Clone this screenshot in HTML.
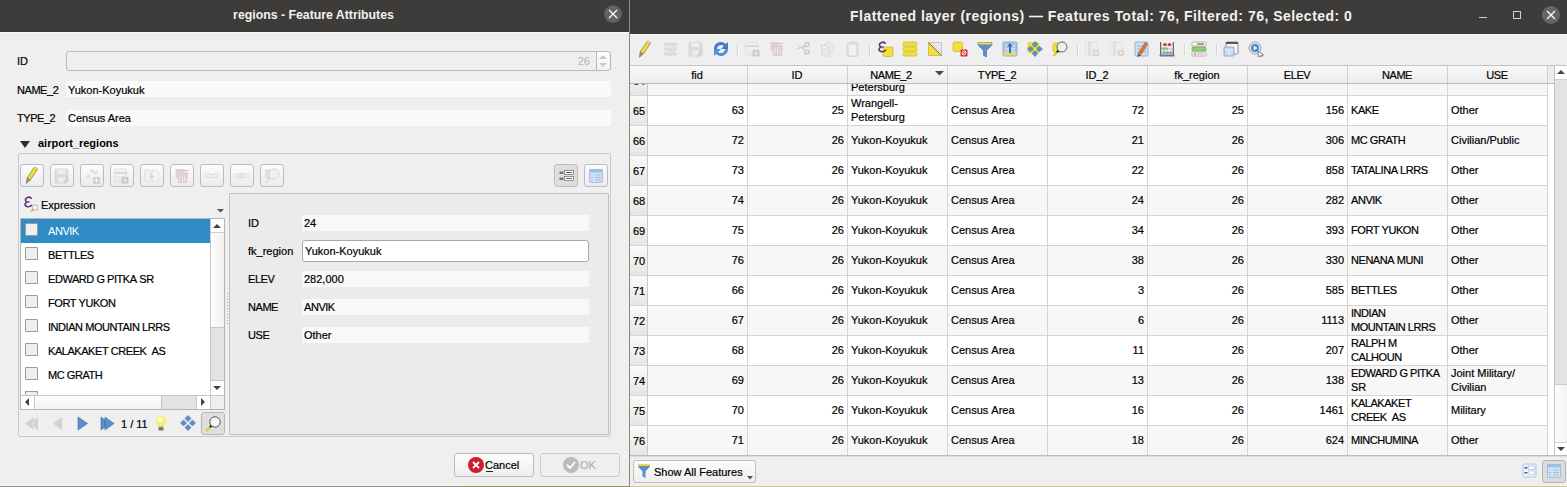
<!DOCTYPE html><html><head><meta charset="utf-8"><style>
html,body{margin:0;padding:0;width:1567px;height:487px;overflow:hidden;background:#efefef;}
body{position:relative;font-family:"Liberation Sans",sans-serif;}
.t{position:absolute;white-space:pre;-webkit-text-stroke:0.2px currentColor;}
.r{position:absolute;}
</style></head><body>
<div class="r" style="left:0px;top:0px;width:629px;height:487px;background:#efefef;"></div>
<div class="r" style="left:0px;top:0px;width:629px;height:32px;background:#3d3c3a;"></div>
<div class="r" style="left:0px;top:32px;width:629px;height:1px;background:#f8f8f8;"></div>
<div class="t" style="left:163.5px;top:8.24px;font-size:12.3px;line-height:15px;color:#f4f2ee;font-weight:bold;-webkit-text-stroke:0;width:300px;text-align:center;">regions - Feature Attributes</div>
<svg class="r" style="left:604px;top:5px" width="18" height="18"><circle cx="9" cy="9" r="8.8" fill="#636262"/><path d="M5 5L13 13M13 5L5 13" stroke="#fff" stroke-width="1.2"/></svg>
<div class="t" style="left:17px;top:54.69px;font-size:11px;line-height:13px;color:#000;">ID</div>
<div class="r" style="left:66px;top:51px;width:545px;height:20px;background:#efefef;border:1px solid #b9b9b9;box-sizing:border-box;border-radius:3px;"></div>
<div class="t" style="left:550px;top:54.69px;font-size:11px;line-height:13px;color:#b4b4b4;width:40px;text-align:right;-webkit-text-stroke:0;">26</div>
<div class="r" style="left:597px;top:52px;width:12px;height:18px;background:linear-gradient(#ffffff,#f2f2f2);border-radius:2px;"></div>
<div class="r" style="left:596px;top:52px;width:1px;height:18px;background:#b9b9b9;"></div>
<svg class="r" style="left:599px;top:55px" width="8" height="13"><path d="M0 4L8 4L4 0Z" fill="#c9c9c9"/><path d="M0 8L8 8L4 12Z" fill="#c9c9c9"/></svg>
<div class="t" style="left:17px;top:83.69px;font-size:11px;line-height:13px;color:#000;letter-spacing:-0.45px;">NAME_2</div>
<div class="r" style="left:66px;top:81px;width:545px;height:16px;background:#fafafa;"></div>
<div class="t" style="left:68px;top:83.69px;font-size:11px;line-height:13px;color:#000;">Yukon-Koyukuk</div>
<div class="t" style="left:17px;top:111.69px;font-size:11px;line-height:13px;color:#000;letter-spacing:-0.45px;">TYPE_2</div>
<div class="r" style="left:66px;top:110px;width:545px;height:16px;background:#fafafa;"></div>
<div class="t" style="left:68px;top:111.69px;font-size:11px;line-height:13px;color:#000;">Census Area</div>
<svg class="r" style="left:19px;top:140px" width="12" height="9"><path d="M1 1L11 1L6 8Z" fill="#2e2e2e"/></svg>
<div class="t" style="left:38px;top:136.69px;font-size:11px;line-height:13px;color:#000;font-weight:bold;-webkit-text-stroke:0;">airport_regions</div>
<div class="r" style="left:18px;top:153px;width:593px;height:284px;background:none;border:1px solid #c9c9c9;box-sizing:border-box;border-radius:2px;"></div>
<div class="r" style="left:20px;top:164px;width:24px;height:23px;background:linear-gradient(#fcfcfc,#ececec);border:1px solid #bdbdbd;box-sizing:border-box;border-radius:3px;"></div>
<div class="r" style="left:50px;top:164px;width:24px;height:23px;background:linear-gradient(#fcfcfc,#ececec);border:1px solid #bdbdbd;box-sizing:border-box;border-radius:3px;"></div>
<div class="r" style="left:80px;top:164px;width:24px;height:23px;background:linear-gradient(#fcfcfc,#ececec);border:1px solid #bdbdbd;box-sizing:border-box;border-radius:3px;"></div>
<div class="r" style="left:110px;top:164px;width:24px;height:23px;background:linear-gradient(#fcfcfc,#ececec);border:1px solid #bdbdbd;box-sizing:border-box;border-radius:3px;"></div>
<div class="r" style="left:140px;top:164px;width:24px;height:23px;background:linear-gradient(#fcfcfc,#ececec);border:1px solid #bdbdbd;box-sizing:border-box;border-radius:3px;"></div>
<div class="r" style="left:170px;top:164px;width:24px;height:23px;background:linear-gradient(#fcfcfc,#ececec);border:1px solid #bdbdbd;box-sizing:border-box;border-radius:3px;"></div>
<div class="r" style="left:200px;top:164px;width:24px;height:23px;background:linear-gradient(#fcfcfc,#ececec);border:1px solid #bdbdbd;box-sizing:border-box;border-radius:3px;"></div>
<div class="r" style="left:230px;top:164px;width:24px;height:23px;background:linear-gradient(#fcfcfc,#ececec);border:1px solid #bdbdbd;box-sizing:border-box;border-radius:3px;"></div>
<div class="r" style="left:260px;top:164px;width:24px;height:23px;background:linear-gradient(#fcfcfc,#ececec);border:1px solid #bdbdbd;box-sizing:border-box;border-radius:3px;"></div>
<svg class="r" style="left:24px;top:166px" width="16" height="18" viewBox="0 0 16 18"><path d="M3 12L10.2 1.2L13.6 3.2L6.4 14Z" fill="#e3d235" stroke="#9c8e1a" stroke-width="0.7"/><path d="M4.7 13L11.9 2.2" stroke="#f4ea8a" stroke-width="0.8"/><path d="M3 12L6.4 14L2.3 17.6Z" fill="#8d8d8d" stroke="#666" stroke-width="0.4"/><path d="M10.2 1.2L11 0.2L14.4 2.2L13.6 3.2Z" fill="#cfcfcf"/></svg>
<svg class="r" style="left:54px;top:168px" width="16" height="16" viewBox="0 0 16 16"><rect x="1" y="1" width="13" height="14" rx="1.5" fill="#dcdcdc" stroke="#d3d3cb" stroke-width="0.8"/><rect x="3.5" y="1.5" width="8" height="4.5" fill="#ececec"/><rect x="4" y="9.5" width="7" height="5" fill="#ececec"/><path d="M9 15L13 8L15 9L11 16Z" fill="#d8d0cc"/></svg>
<svg class="r" style="left:84px;top:168px" width="16" height="16" viewBox="0 0 16 16"><circle cx="4" cy="8.5" r="1.6" fill="#e6e6e6" stroke="#d8d8d8" stroke-width="0.6"/><circle cx="8" cy="3" r="1.6" fill="#e6e6e6" stroke="#d8d8d8" stroke-width="0.6"/><circle cx="12" cy="4.5" r="1.6" fill="#e6e6e6" stroke="#d8d8d8" stroke-width="0.6"/><rect x="9" y="9" width="7" height="7" rx="1" fill="#d3d0c4"/><path d="M12.5 10.3V14.7M10.3 12.5H14.7" stroke="#f5f5f5" stroke-width="1.1"/></svg>
<svg class="r" style="left:114px;top:168px" width="16" height="16" viewBox="0 0 16 16"><rect x="0.5" y="1" width="12" height="13" rx="1" fill="#f2f2f2" stroke="#d9dbe0" stroke-width="0.8"/><rect x="0.5" y="4" width="13" height="2" fill="#dcd9cf"/><path d="M2 8.5H11M2 10.5H11M2 12.5H11" stroke="#dedede" stroke-width="0.8"/><rect x="7.5" y="9" width="7" height="6.5" rx="1" fill="#cdc9bd"/><path d="M11 10.5V14M9.3 12.2H12.7" stroke="#f0f0f0" stroke-width="1.1"/></svg>
<svg class="r" style="left:144px;top:168px" width="16" height="16" viewBox="0 0 16 16"><path d="M1 2H5L6.5 4V13H1Z" fill="#f4f4f4" stroke="#d0d0d0" stroke-width="0.7"/><path d="M8 2H12L14.5 4.5V13H8Z" fill="#f4f4f4" stroke="#d8d8d8" stroke-width="0.7"/><path d="M5 8.5H10" stroke="#d8d4c0" stroke-width="1.5"/></svg>
<svg class="r" style="left:174px;top:168px" width="16" height="16" viewBox="0 0 16 16"><rect x="1.5" y="1" width="9" height="9" rx="1" fill="#dedbd2"/><path d="M1.5 2.5H14.5" stroke="#d4c6c6" stroke-width="1.2"/><path d="M3 4.5H14L13 15H4Z" fill="#dccccc"/><path d="M6 6V14M8.5 6V14M11 6V14" stroke="#eee" stroke-width="1"/></svg>
<svg class="r" style="left:204px;top:168px" width="16" height="16" viewBox="0 0 16 16"><rect x="1" y="6" width="6.5" height="3.5" rx="1.75" fill="none" stroke="#dcd8d0" stroke-width="1"/><rect x="7.5" y="6" width="6.5" height="3.5" rx="1.75" fill="none" stroke="#dcd8d0" stroke-width="1"/></svg>
<svg class="r" style="left:234px;top:168px" width="16" height="16" viewBox="0 0 16 16"><rect x="0.5" y="6" width="5.5" height="3.5" rx="1.75" fill="none" stroke="#dcd8d0" stroke-width="1"/><rect x="9.5" y="6" width="5.5" height="3.5" rx="1.75" fill="none" stroke="#dcd8d0" stroke-width="1"/><path d="M7.75 4V11.5M5.5 5L10 10.5M10 5L5.5 10.5" stroke="#d8d4cc" stroke-width="0.7"/></svg>
<svg class="r" style="left:264px;top:168px" width="16" height="16" viewBox="0 0 16 16"><rect x="1" y="1.5" width="7" height="9" rx="1" fill="#e0dfd8"/><circle cx="10" cy="6" r="5" fill="#f1f1f1" stroke="#d6d6d6" stroke-width="1"/><path d="M6.5 9.5L1.5 15" stroke="#dcdcdc" stroke-width="2"/></svg>
<div class="r" style="left:554px;top:164px;width:24px;height:23px;background:#dedede;border:1px solid #bdbdbd;box-sizing:border-box;border-radius:3px;"></div>
<div class="r" style="left:584px;top:164px;width:24px;height:23px;background:linear-gradient(#fcfcfc,#ececec);border:1px solid #bdbdbd;box-sizing:border-box;border-radius:3px;"></div>
<svg class="r" style="left:558px;top:168px" width="16" height="16" viewBox="0 0 16 16"><rect x="1.5" y="3.5" width="4" height="2.5" fill="#777"/><rect x="6.5" y="2.5" width="9" height="4" fill="#fff" stroke="#777" stroke-width="0.8"/><path d="M8 4.5H14" stroke="#4a6a9a" stroke-width="1"/><rect x="1.5" y="9.5" width="4" height="2.5" fill="#777"/><rect x="6.5" y="8.5" width="9" height="4" fill="#fff" stroke="#777" stroke-width="0.8"/><path d="M8 10.5H14" stroke="#4a6a9a" stroke-width="1"/></svg>
<svg class="r" style="left:588px;top:168px" width="16" height="16" viewBox="0 0 16 16"><rect x="1.5" y="1.5" width="13" height="13" rx="1" fill="#d5e4f5" stroke="#8fb0d8" stroke-width="0.8"/><rect x="1.5" y="1.5" width="13" height="3" fill="#9fc0e6"/><path d="M3 7H5M7 7H13M3 9.5H5M7 9.5H13M3 12H5M7 12H13" stroke="#8fb0d8" stroke-width="0.8"/></svg>
<svg class="r" style="left:24px;top:196px" width="16" height="16" viewBox="0 0 16 16"><path d="M7.2 2.2C6.3 1.2 4.8 1 3.5 1.4C2 1.9 1.2 3.2 1.6 4.5C1.9 5.4 2.8 5.9 3.6 6C2.4 6.2 1.2 7 1.1 8.3C1 9.9 2.5 10.8 4.1 10.8C5.5 10.8 6.8 10.2 7.6 9.3" fill="none" stroke="#5b2d7a" stroke-width="1.6" stroke-linecap="round"/><path d="M3.6 6H5.8" stroke="#5b2d7a" stroke-width="1.2"/><circle cx="11" cy="11.5" r="2.8" fill="#f4f4f4" stroke="#999" stroke-width="0.7"/><path d="M9 13.5L7.3 15.5" stroke="#d7a92a" stroke-width="1.4"/></svg>
<div class="t" style="left:41px;top:198.69px;font-size:11px;line-height:13px;color:#000;">Expression</div>
<svg class="r" style="left:217px;top:209px" width="7" height="4"><path d="M0 0L7 0L3.5 3.5Z" fill="#555"/></svg>
<div class="r" style="left:20px;top:218px;width:205px;height:192px;background:#ffffff;border:1px solid #b5b5b5;box-sizing:border-box;"></div>
<div class="r" style="left:21px;top:219px;width:189px;height:24px;background:#308cc6;"></div>
<div class="r" style="left:25px;top:223px;width:13px;height:13px;background:#efefef;border:1px solid #9b9b9b;box-sizing:border-box;border-radius:1px;"></div>
<div class="t" style="left:48px;top:224.69px;font-size:11px;line-height:13px;color:#fff;-webkit-text-stroke:0;letter-spacing:-0.45px;">ANVIK</div>
<div class="r" style="left:25px;top:247px;width:13px;height:13px;background:#efefef;border:1px solid #9b9b9b;box-sizing:border-box;border-radius:1px;"></div>
<div class="t" style="left:48px;top:248.69px;font-size:11px;line-height:13px;color:#000;letter-spacing:-0.45px;">BETTLES</div>
<div class="r" style="left:25px;top:271px;width:13px;height:13px;background:#efefef;border:1px solid #9b9b9b;box-sizing:border-box;border-radius:1px;"></div>
<div class="t" style="left:48px;top:272.69px;font-size:11px;line-height:13px;color:#000;letter-spacing:-0.45px;">EDWARD&nbsp;G&nbsp;PITKA&nbsp;SR</div>
<div class="r" style="left:25px;top:295px;width:13px;height:13px;background:#efefef;border:1px solid #9b9b9b;box-sizing:border-box;border-radius:1px;"></div>
<div class="t" style="left:48px;top:296.69px;font-size:11px;line-height:13px;color:#000;letter-spacing:-0.45px;">FORT&nbsp;YUKON</div>
<div class="r" style="left:25px;top:319px;width:13px;height:13px;background:#efefef;border:1px solid #9b9b9b;box-sizing:border-box;border-radius:1px;"></div>
<div class="t" style="left:48px;top:320.69px;font-size:11px;line-height:13px;color:#000;letter-spacing:-0.45px;">INDIAN&nbsp;MOUNTAIN&nbsp;LRRS</div>
<div class="r" style="left:25px;top:343px;width:13px;height:13px;background:#efefef;border:1px solid #9b9b9b;box-sizing:border-box;border-radius:1px;"></div>
<div class="t" style="left:48px;top:344.69px;font-size:11px;line-height:13px;color:#000;letter-spacing:-0.45px;">KALAKAKET&nbsp;CREEK&nbsp;&nbsp;AS</div>
<div class="r" style="left:25px;top:367px;width:13px;height:13px;background:#efefef;border:1px solid #9b9b9b;box-sizing:border-box;border-radius:1px;"></div>
<div class="t" style="left:48px;top:368.69px;font-size:11px;line-height:13px;color:#000;letter-spacing:-0.45px;">MC&nbsp;GRATH</div>
<div class="r" style="left:25px;top:391px;width:13px;height:13px;background:#efefef;border:1px solid #9b9b9b;box-sizing:border-box;border-radius:1px;height:4px;border-bottom:none;"></div>
<div class="r" style="left:210px;top:219px;width:1px;height:176px;background:#c8c8c8;"></div>
<div class="r" style="left:211px;top:219px;width:13px;height:176px;background:linear-gradient(90deg,#fdfdfd,#f1f1f1);"></div>
<div class="r" style="left:211px;top:219px;width:13px;height:13px;background:#ffffff;"></div>
<div class="r" style="left:211px;top:232px;width:13px;height:1px;background:#cfcfcf;"></div>
<svg class="r" style="left:213px;top:224px" width="8" height="4"><path d="M0 4L8 4L4 0Z" fill="#444"/></svg>
<div class="r" style="left:211px;top:327px;width:13px;height:54px;background:#e3e3e3;border:1px solid #c6c6c6;box-sizing:border-box;border-left:none;border-right:none;"></div>
<div class="r" style="left:211px;top:381px;width:13px;height:14px;background:#ffffff;"></div>
<svg class="r" style="left:213px;top:386px" width="8" height="4"><path d="M0 0L8 0L4 4Z" fill="#444"/></svg>
<div class="r" style="left:21px;top:395px;width:203px;height:1px;background:#c8c8c8;"></div>
<div class="r" style="left:21px;top:396px;width:189px;height:13px;background:linear-gradient(#fdfdfd,#f1f1f1);"></div>
<div class="r" style="left:21px;top:396px;width:13px;height:13px;background:#ffffff;"></div>
<div class="r" style="left:34px;top:396px;width:1px;height:13px;background:#c8c8c8;"></div>
<div class="r" style="left:161px;top:396px;width:36px;height:13px;background:#e3e3e3;border:1px solid #c6c6c6;box-sizing:border-box;border-top:none;border-bottom:none;"></div>
<div class="r" style="left:197px;top:396px;width:13px;height:13px;background:#ffffff;"></div>
<div class="r" style="left:210px;top:396px;width:1px;height:13px;background:#c8c8c8;"></div>
<div class="r" style="left:211px;top:396px;width:13px;height:13px;background:#efefef;"></div>
<svg class="r" style="left:25px;top:398px" width="4" height="8"><path d="M4 0L4 8L0 4Z" fill="#444"/></svg>
<svg class="r" style="left:201px;top:398px" width="4" height="8"><path d="M0 0L0 8L4 4Z" fill="#444"/></svg>
<div class="t" style="left:121px;top:417.69px;font-size:11px;line-height:13px;color:#000;">1 / 11</div>
<div class="r" style="left:201px;top:412px;width:24px;height:23px;background:#dedede;border:1px solid #b7b7b7;box-sizing:border-box;border-radius:3px;"></div>
<svg class="r" style="left:24px;top:416px" width="15" height="15" viewBox="0 0 15 15"><path d="M9.5 1L1 7.5L9.5 14Z" fill="#cfd3d8"/><path d="M14 1L10 4V11L14 14Z" fill="#cfd3d8"/></svg>
<svg class="r" style="left:52px;top:416px" width="11" height="15" viewBox="0 0 11 15"><path d="M10 1L1 7.5L10 14Z" fill="#cfd3d8"/></svg>
<svg class="r" style="left:77px;top:416px" width="11" height="15" viewBox="0 0 11 15"><path d="M1 1L10.5 7.5L1 14Z" fill="#5d8fc9" stroke="#3a6aa8" stroke-width="0.6"/></svg>
<svg class="r" style="left:100px;top:416px" width="15" height="15" viewBox="0 0 15 15"><path d="M1 1L5 4V11L1 14Z" fill="#5d8fc9" stroke="#3a6aa8" stroke-width="0.6"/><path d="M5 1L14 7.5L5 14Z" fill="#5d8fc9" stroke="#3a6aa8" stroke-width="0.6"/></svg>
<svg class="r" style="left:155px;top:415px" width="12" height="16" viewBox="0 0 12 16"><ellipse cx="6" cy="6" rx="5.5" ry="5.8" fill="#f7f07a"/><ellipse cx="5" cy="4.5" rx="2.5" ry="2.5" fill="#fdfbd0"/><path d="M3 10H9V12H3Z" fill="#e8e07a"/><rect x="3.5" y="12" width="5" height="3.5" fill="#7a7a7a"/></svg>
<svg class="r" style="left:180px;top:415px" width="16" height="16" viewBox="0 0 16 16"><path d="M8 0.5L11 3.5L8 6.5L5 3.5ZM8 9.5L11 12.5L8 15.5L5 12.5ZM0.5 8L3.5 5L6.5 8L3.5 11ZM9.5 8L12.5 5L15.5 8L12.5 11Z" fill="#5d8fc9" stroke="#3f6ea6" stroke-width="0.5"/></svg>
<svg class="r" style="left:205px;top:416px" width="16" height="16" viewBox="0 0 16 16"><circle cx="10" cy="6" r="5.2" fill="#f8f8f8" stroke="#555" stroke-width="1"/><path d="M6.5 9.5L1.5 15" stroke="#e8c030" stroke-width="2"/><path d="M6.5 9.5L4.8 11.3" stroke="#333" stroke-width="2"/></svg>
<div class="r" style="left:227px;top:293px;width:1px;height:1px;background:#a8a8a8;"></div>
<div class="r" style="left:227px;top:296px;width:1px;height:1px;background:#a8a8a8;"></div>
<div class="r" style="left:227px;top:299px;width:1px;height:1px;background:#a8a8a8;"></div>
<div class="r" style="left:227px;top:302px;width:1px;height:1px;background:#a8a8a8;"></div>
<div class="r" style="left:227px;top:305px;width:1px;height:1px;background:#a8a8a8;"></div>
<div class="r" style="left:227px;top:308px;width:1px;height:1px;background:#a8a8a8;"></div>
<div class="r" style="left:227px;top:311px;width:1px;height:1px;background:#a8a8a8;"></div>
<div class="r" style="left:227px;top:314px;width:1px;height:1px;background:#a8a8a8;"></div>
<div class="r" style="left:227px;top:317px;width:1px;height:1px;background:#a8a8a8;"></div>
<div class="r" style="left:227px;top:320px;width:1px;height:1px;background:#a8a8a8;"></div>
<div class="r" style="left:227px;top:323px;width:1px;height:1px;background:#a8a8a8;"></div>
<div class="r" style="left:229px;top:193px;width:380px;height:242px;background:#ebebeb;border:1px solid #bfbfbf;box-sizing:border-box;border-radius:1px;"></div>
<div class="t" style="left:248px;top:216.69px;font-size:11px;line-height:13px;color:#000;">ID</div>
<div class="r" style="left:302px;top:215px;width:287px;height:16px;background:#f8f8f8;"></div>
<div class="t" style="left:304px;top:216.69px;font-size:11px;line-height:13px;color:#000;">24</div>
<div class="t" style="left:248px;top:244.69px;font-size:11px;line-height:13px;color:#000;">fk_region</div>
<div class="r" style="left:302px;top:240px;width:287px;height:22px;background:#ffffff;border:1px solid #a8a8a8;box-sizing:border-box;border-radius:3px;"></div>
<div class="t" style="left:305px;top:244.69px;font-size:11px;line-height:13px;color:#000;">Yukon-Koyukuk</div>
<div class="t" style="left:248px;top:272.69px;font-size:11px;line-height:13px;color:#000;letter-spacing:-0.45px;">ELEV</div>
<div class="r" style="left:302px;top:271px;width:287px;height:16px;background:#f8f8f8;"></div>
<div class="t" style="left:304px;top:272.69px;font-size:11px;line-height:13px;color:#000;">282,000</div>
<div class="t" style="left:248px;top:300.69px;font-size:11px;line-height:13px;color:#000;letter-spacing:-0.45px;">NAME</div>
<div class="r" style="left:302px;top:299px;width:287px;height:16px;background:#f8f8f8;"></div>
<div class="t" style="left:304px;top:300.69px;font-size:11px;line-height:13px;color:#000;letter-spacing:-0.45px;">ANVIK</div>
<div class="t" style="left:248px;top:328.69px;font-size:11px;line-height:13px;color:#000;letter-spacing:-0.45px;">USE</div>
<div class="r" style="left:302px;top:327px;width:287px;height:16px;background:#f8f8f8;"></div>
<div class="t" style="left:304px;top:328.69px;font-size:11px;line-height:13px;color:#000;">Other</div>
<div class="r" style="left:454px;top:453px;width:80px;height:24px;background:linear-gradient(#fcfcfc,#efefef);border:1px solid #bcbcbc;box-sizing:border-box;border-radius:3px;"></div>
<svg class="r" style="left:467px;top:456px" width="18" height="18"><circle cx="9" cy="9" r="8" fill="#d01c30"/><path d="M6 6L12 12M12 6L6 12" stroke="#fff" stroke-width="1.8"/></svg>
<div class="t" style="left:485px;top:458.69px;font-size:11px;line-height:13px;color:#000;">Cancel</div>
<div class="r" style="left:486px;top:471px;width:7px;height:1px;background:#222;"></div>
<div class="r" style="left:581px;top:471px;width:8px;height:1px;background:#c4c4c4;"></div>
<div class="r" style="left:540px;top:453px;width:80px;height:24px;background:#efefef;border:1px solid #cdcdcd;box-sizing:border-box;border-radius:3px;"></div>
<svg class="r" style="left:562px;top:456px" width="18" height="18"><circle cx="9" cy="9" r="8" fill="#b9beba"/><path d="M5 9L8 12L13 6" stroke="#fff" stroke-width="1.8" fill="none"/></svg>
<div class="t" style="left:580px;top:458.69px;font-size:11px;line-height:13px;color:#b0b0b0;">OK</div>
<div class="r" style="left:0px;top:485px;width:629px;height:1px;background:#f6f6f6;"></div>
<div class="r" style="left:0px;top:486px;width:461px;height:1px;background:#8f8f8f;"></div>
<div class="r" style="left:461px;top:486px;width:168px;height:1px;background:#8e8c6c;"></div>
<div class="r" style="left:629px;top:0px;width:1px;height:34px;background:#8a8a8a;"></div>
<div class="r" style="left:629px;top:34px;width:1px;height:453px;background:#8b8a72;"></div>
<div class="r" style="left:630px;top:0px;width:937px;height:34px;background:#3d3c3a;"></div>
<div class="r" style="left:630px;top:34px;width:937px;height:1px;background:#f8f8f8;"></div>
<div class="r" style="left:630px;top:35px;width:937px;height:452px;background:#efefef;"></div>
<div class="t" style="left:850px;top:7.65px;font-size:14px;line-height:17px;color:#f4f2ee;font-weight:bold;-webkit-text-stroke:0;letter-spacing:0.48px;">Flattened layer (regions) — Features Total: 76, Filtered: 76, Selected: 0</div>
<div class="r" style="left:1479px;top:17px;width:8px;height:1px;background:#cfcfcf;"></div>
<div class="r" style="left:1513px;top:11px;width:8px;height:8px;background:none;border:1px solid #cfcfcf;box-sizing:border-box;"></div>
<svg class="r" style="left:1542px;top:6px" width="18" height="18"><circle cx="9" cy="9" r="9" fill="#666565"/><path d="M5 5L13 13M13 5L5 13" stroke="#fff" stroke-width="1.2"/></svg>
<svg class="r" style="left:637px;top:40px" width="16" height="18" viewBox="0 0 16 18"><path d="M3 12L10.2 1.2L13.6 3.2L6.4 14Z" fill="#e3d235" stroke="#9c8e1a" stroke-width="0.7"/><path d="M4.7 13L11.9 2.2" stroke="#f4ea8a" stroke-width="0.8"/><path d="M3 12L6.4 14L2.3 17.6Z" fill="#8d8d8d" stroke="#666" stroke-width="0.4"/><path d="M10.2 1.2L11 0.2L14.4 2.2L13.6 3.2Z" fill="#cfcfcf"/></svg>
<svg class="r" style="left:663px;top:41px" width="16" height="16" viewBox="0 0 16 16"><rect x="1" y="1.5" width="13" height="3.5" rx="1.5" fill="#dfdcd4"/><rect x="1" y="6.3" width="13" height="3.5" rx="1.5" fill="#dfdcd4"/><rect x="1" y="11" width="13" height="3.5" rx="1.5" fill="#dfdcd4"/><path d="M6 13L12 2L14.5 3.2L8.5 14.5Z" fill="#e9e4e2" stroke="#d6d0ce" stroke-width="0.7"/></svg>
<svg class="r" style="left:688px;top:41px" width="16" height="16" viewBox="0 0 16 16"><rect x="1" y="1" width="13" height="14" rx="1.5" fill="#dcdcdc" stroke="#d3d3cb" stroke-width="0.8"/><rect x="3.5" y="1.5" width="8" height="4.5" fill="#ececec"/><rect x="4" y="9.5" width="7" height="5" fill="#ececec"/><path d="M9 15L13 8L15 9L11 16Z" fill="#d8d0cc"/></svg>
<svg class="r" style="left:713px;top:41px" width="16" height="16" viewBox="0 0 16 16"><path d="M1 8A7 7 0 0 1 12.9 3L15 1V8H8L10.9 5.1A4.2 4.2 0 0 0 3.8 8Z" fill="#3f7cc6"/><path d="M15 8A7 7 0 0 1 3.1 13L1 15V8H8L5.1 10.9A4.2 4.2 0 0 0 12.2 8Z" fill="#4f90d8"/></svg>
<svg class="r" style="left:745px;top:41px" width="16" height="16" viewBox="0 0 16 16"><rect x="0.5" y="1" width="12" height="13" rx="1" fill="#f2f2f2" stroke="#d9dbe0" stroke-width="0.8"/><rect x="0.5" y="4" width="13" height="2" fill="#dcd9cf"/><path d="M2 8.5H11M2 10.5H11M2 12.5H11" stroke="#dedede" stroke-width="0.8"/><rect x="7.5" y="9" width="7" height="6.5" rx="1" fill="#cdc9bd"/><path d="M11 10.5V14M9.3 12.2H12.7" stroke="#f0f0f0" stroke-width="1.1"/></svg>
<svg class="r" style="left:769px;top:41px" width="16" height="16" viewBox="0 0 16 16"><rect x="1.5" y="1" width="9" height="9" rx="1" fill="#dedbd2"/><path d="M1.5 2.5H14.5" stroke="#d4c6c6" stroke-width="1.2"/><path d="M3 4.5H14L13 15H4Z" fill="#dccccc"/><path d="M6 6V14M8.5 6V14M11 6V14" stroke="#eee" stroke-width="1"/></svg>
<svg class="r" style="left:795px;top:41px" width="16" height="16" viewBox="0 0 16 16"><path d="M1.5 3L9 8.5M1 8L9 5.5" stroke="#cfcfcf" stroke-width="1"/><circle cx="12" cy="3.5" r="2" fill="none" stroke="#c8bcbc" stroke-width="1.2"/><circle cx="12" cy="11" r="2" fill="none" stroke="#c8bcbc" stroke-width="1.2"/><path d="M8 7.5L10.5 4.8M8 7.5L10.5 10" stroke="#c8bcbc" stroke-width="1"/></svg>
<svg class="r" style="left:820px;top:41px" width="16" height="16" viewBox="0 0 16 16"><path d="M5 1.5H10L13 4.5V12H5Z" fill="#eaeaea" stroke="#dcdcdc" stroke-width="0.8"/><path d="M1.5 4.5H7L9.5 7V15H1.5Z" fill="#e6e6e6" stroke="#d6d6d6" stroke-width="0.8"/><rect x="2.5" y="5.5" width="3" height="1.5" fill="#fafafa"/></svg>
<svg class="r" style="left:846px;top:41px" width="16" height="16" viewBox="0 0 16 16"><rect x="1" y="1.5" width="11" height="14" rx="1" fill="#e0e0e0" stroke="#d6d6d0" stroke-width="0.8"/><rect x="3" y="4" width="7" height="10" fill="#f2f2f2"/><rect x="4" y="0.5" width="5" height="2.5" fill="#d8d8d8"/></svg>
<svg class="r" style="left:878px;top:41px" width="16" height="16" viewBox="0 0 16 16"><rect x="5" y="6" width="10" height="9.5" rx="1.5" fill="#f2df3e" stroke="#d1b92a" stroke-width="0.8"/><path d="M7.2 2.2C6.3 1.2 4.8 1 3.5 1.4C2 1.9 1.2 3.2 1.6 4.5C1.9 5.4 2.8 5.9 3.6 6C2.4 6.2 1.2 7 1.1 8.3C1 9.9 2.5 10.8 4.1 10.8C5.5 10.8 6.8 10.2 7.6 9.3" fill="none" stroke="#5b2d7a" stroke-width="1.6" stroke-linecap="round"/><path d="M3.6 6H5.8" stroke="#5b2d7a" stroke-width="1.2"/></svg>
<svg class="r" style="left:902px;top:41px" width="16" height="16" viewBox="0 0 16 16"><rect x="1" y="1" width="14" height="4" rx="1.5" fill="#f2df3e" stroke="#d1b92a" stroke-width="0.8"/><rect x="1" y="6" width="14" height="4" rx="1.5" fill="#f2df3e" stroke="#d1b92a" stroke-width="0.8"/><rect x="1" y="11" width="14" height="4" rx="1.5" fill="#f2df3e" stroke="#d1b92a" stroke-width="0.8"/></svg>
<svg class="r" style="left:927px;top:41px" width="16" height="16" viewBox="0 0 16 16"><rect x="1.5" y="1.5" width="13" height="13" fill="#e8e8e8" stroke="#bdbdbd" stroke-width="0.8"/><path d="M1.5 1.5L14.5 14.5H1.5Z" fill="#f2df3e" stroke="#d1b92a" stroke-width="0.8"/><path d="M1.5 1.5L14.5 14.5" stroke="#555" stroke-width="0.8"/></svg>
<svg class="r" style="left:952px;top:41px" width="16" height="16" viewBox="0 0 16 16"><rect x="1" y="1" width="9.5" height="9.5" rx="1.5" fill="#f2df3e" stroke="#d1b92a" stroke-width="0.8"/><rect x="8.5" y="8.5" width="7" height="7" rx="1" fill="#d42a36"/><path d="M10 14L14 10" stroke="#fff" stroke-width="1"/><circle cx="12" cy="12" r="2" fill="none" stroke="#fff" stroke-width="0.8"/></svg>
<svg class="r" style="left:977px;top:41px" width="16" height="16" viewBox="0 0 16 16"><path d="M1 1.5H15V4L9.5 9.5V16L6.5 14.5V9.5L1 4Z" fill="#5d8fc9" stroke="#3f6ea6" stroke-width="0.6"/><rect x="1.5" y="1.5" width="13" height="2" fill="#f0dc3a"/></svg>
<svg class="r" style="left:1002px;top:41px" width="16" height="16" viewBox="0 0 16 16"><rect x="1" y="1" width="14" height="14" rx="1" fill="#a9c6e8" stroke="#7ea4d1" stroke-width="0.8"/><path d="M3 5H13M3 8H13M3 11H13" stroke="#e8f0f8" stroke-width="1"/><rect x="1.5" y="11.5" width="13" height="3" fill="#ead85a"/><path d="M8 2L5 5.5H7V12H9V5.5H11Z" fill="#3c6fb0"/></svg>
<svg class="r" style="left:1027px;top:41px" width="16" height="16" viewBox="0 0 16 16"><rect x="1" y="1.5" width="10.5" height="10" rx="1.5" fill="#f5e13a" stroke="#d7bd22" stroke-width="0.7"/><path d="M8 0.5L11 3.8H9.3V5.8H6.7V3.8H5ZM8 15.5L11 12.2H9.3V10.2H6.7V12.2H5ZM0.5 8L3.8 5V6.7H5.8V9.3H3.8V11ZM15.5 8L12.2 5V6.7H10.2V9.3H12.2V11Z" fill="#5d8fc9" stroke="#3f6ea6" stroke-width="0.5"/></svg>
<svg class="r" style="left:1052px;top:41px" width="16" height="16" viewBox="0 0 16 16"><rect x="1" y="2" width="9" height="9" rx="1.5" fill="#f2df3e" stroke="#d1b92a" stroke-width="0.8"/><circle cx="10" cy="6" r="5" fill="#f3f1e4" stroke="#666" stroke-width="1"/><path d="M6.5 9.5L1.5 15" stroke="#e8c030" stroke-width="2.2"/><path d="M6.5 9.5L4.8 11.3" stroke="#333" stroke-width="2.2"/></svg>
<svg class="r" style="left:1084px;top:41px" width="16" height="16" viewBox="0 0 16 16"><rect x="1" y="1" width="12" height="13" rx="1" fill="#ededed" stroke="#dfdfdf" stroke-width="0.8"/><rect x="4" y="0.5" width="3" height="14" fill="#e0ded6"/><rect x="9" y="9" width="6" height="6" rx="1" fill="#d6d2c6"/><path d="M12 10V14M10 12H14" stroke="#f3f3f3" stroke-width="1"/></svg>
<svg class="r" style="left:1109px;top:41px" width="16" height="16" viewBox="0 0 16 16"><rect x="1" y="1" width="12" height="13" rx="1" fill="#ededed" stroke="#dfdfdf" stroke-width="0.8"/><rect x="4" y="0.5" width="3" height="14" fill="#e0ded6"/><rect x="9" y="9" width="6" height="6" rx="1" fill="#dbd0cc"/><path d="M10.5 10.5L13.5 13.5M13.5 10.5L10.5 13.5" stroke="#f3f3f3" stroke-width="1"/></svg>
<svg class="r" style="left:1134px;top:41px" width="16" height="16" viewBox="0 0 16 16"><rect x="1" y="1" width="13" height="14" rx="1" fill="#cfe0f3" stroke="#7fa6d4" stroke-width="0.8"/><path d="M3 5H12M3 8H12M3 11H12" stroke="#7fa6d4" stroke-width="0.8"/><path d="M4 13L11 1.5L13.5 3L6.5 14.5Z" fill="#e0782e" stroke="#a8541b" stroke-width="0.6"/><path d="M4 13L6.5 14.5L3.5 16Z" fill="#444"/></svg>
<svg class="r" style="left:1159px;top:41px" width="16" height="16" viewBox="0 0 16 16"><rect x="1" y="1" width="1.2" height="14" fill="#666"/><rect x="13.8" y="1" width="1.2" height="14" fill="#666"/><rect x="0.5" y="13.5" width="15" height="2" fill="#777"/><path d="M2 4H14M2 8H14M2 12H14" stroke="#aaa" stroke-width="0.7"/><circle cx="6" cy="3.5" r="1.6" fill="#d82a2a"/><circle cx="10.5" cy="3.5" r="1.6" fill="#d82a2a"/><circle cx="4.5" cy="7.7" r="1.6" fill="#8cc47c"/><circle cx="7.5" cy="7.7" r="1.6" fill="#8cc47c"/><circle cx="5" cy="11.7" r="1.6" fill="#7aa8d8"/><circle cx="8.5" cy="11.7" r="1.6" fill="#7aa8d8"/><circle cx="12" cy="11.7" r="1.6" fill="#7aa8d8"/></svg>
<svg class="r" style="left:1191px;top:41px" width="16" height="16" viewBox="0 0 16 16"><rect x="1" y="1" width="14" height="4" rx="1" fill="#fafafa" stroke="#9a9a9a" stroke-width="0.7"/><path d="M6 3H13" stroke="#444" stroke-width="1"/><rect x="1" y="6" width="14" height="4" rx="1" fill="#8fcf6f" stroke="#6aaa4c" stroke-width="0.7"/><rect x="1" y="11" width="14" height="4" rx="1" fill="#fafafa" stroke="#9a9a9a" stroke-width="0.7"/><path d="M3 13H5" stroke="#c22" stroke-width="1.2"/><path d="M6 13H13" stroke="#e9a0a0" stroke-width="1"/></svg>
<svg class="r" style="left:1223px;top:41px" width="16" height="16" viewBox="0 0 16 16"><rect x="3" y="1" width="12" height="12" rx="1" fill="#f6f6f6" stroke="#777" stroke-width="0.8"/><rect x="3" y="1" width="12" height="2" fill="#555"/><rect x="1" y="6" width="10" height="9" rx="1" fill="#c4d8ef" stroke="#7a9cc7" stroke-width="0.8"/><path d="M2 9H10M6 9V14" stroke="#eef4fb" stroke-width="1"/></svg>
<svg class="r" style="left:1248px;top:41px" width="16" height="16" viewBox="0 0 16 16"><circle cx="7" cy="7" r="6" fill="#dde3ea" stroke="#9aa6b4" stroke-width="1"/><circle cx="7" cy="7" r="4" fill="#4a8ad2"/><path d="M5.8 4.8L9.5 7L5.8 9.2Z" fill="#fff"/><path d="M10 10L15.5 14L13 14.5L14.5 16L13.5 16.5L12 14.8L10.5 16Z" fill="#fff" stroke="#555" stroke-width="0.7"/></svg>
<div class="r" style="left:737px;top:44px;width:1px;height:11px;background:#d2d2d2;"></div>
<div class="r" style="left:738px;top:44px;width:1px;height:11px;background:#fdfdfd;"></div>
<div class="r" style="left:869px;top:44px;width:1px;height:11px;background:#d2d2d2;"></div>
<div class="r" style="left:870px;top:44px;width:1px;height:11px;background:#fdfdfd;"></div>
<div class="r" style="left:1077px;top:44px;width:1px;height:11px;background:#d2d2d2;"></div>
<div class="r" style="left:1078px;top:44px;width:1px;height:11px;background:#fdfdfd;"></div>
<div class="r" style="left:1184px;top:44px;width:1px;height:11px;background:#d2d2d2;"></div>
<div class="r" style="left:1185px;top:44px;width:1px;height:11px;background:#fdfdfd;"></div>
<div class="r" style="left:1216px;top:44px;width:1px;height:11px;background:#d2d2d2;"></div>
<div class="r" style="left:1217px;top:44px;width:1px;height:11px;background:#fdfdfd;"></div>
<div class="r" style="left:630px;top:65px;width:924px;height:391px;background:#ffffff;"></div>
<div class="r" style="left:630px;top:65px;width:924px;height:19px;background:linear-gradient(#f9f9f9,#ececec);"></div>
<div class="r" style="left:1548px;top:66px;width:6px;height:17px;background:#ececec;"></div>
<div class="r" style="left:630px;top:65px;width:924px;height:1px;background:#c4c4c4;"></div>
<div class="r" style="left:630px;top:83px;width:924px;height:1px;background:#b9b9b9;"></div>
<div class="r" style="left:747px;top:66px;width:1px;height:17px;background:#d0d0d0;"></div>
<div class="t" style="left:647.0px;top:68.69px;font-size:11px;line-height:13px;color:#000;width:100px;text-align:center;">fid</div>
<div class="r" style="left:847px;top:66px;width:1px;height:17px;background:#d0d0d0;"></div>
<div class="t" style="left:747.0px;top:68.69px;font-size:11px;line-height:13px;color:#000;width:100px;text-align:center;">ID</div>
<div class="r" style="left:947px;top:66px;width:1px;height:17px;background:#d0d0d0;"></div>
<div class="t" style="left:841.0px;top:68.69px;font-size:11px;line-height:13px;color:#000;width:100px;text-align:center;letter-spacing:-0.45px;">NAME_2</div>
<div class="r" style="left:1047px;top:66px;width:1px;height:17px;background:#d0d0d0;"></div>
<div class="t" style="left:947.0px;top:68.69px;font-size:11px;line-height:13px;color:#000;width:100px;text-align:center;letter-spacing:-0.45px;">TYPE_2</div>
<div class="r" style="left:1147px;top:66px;width:1px;height:17px;background:#d0d0d0;"></div>
<div class="t" style="left:1047.0px;top:68.69px;font-size:11px;line-height:13px;color:#000;width:100px;text-align:center;">ID_2</div>
<div class="r" style="left:1247px;top:66px;width:1px;height:17px;background:#d0d0d0;"></div>
<div class="t" style="left:1147.0px;top:68.69px;font-size:11px;line-height:13px;color:#000;width:100px;text-align:center;">fk_region</div>
<div class="r" style="left:1347px;top:66px;width:1px;height:17px;background:#d0d0d0;"></div>
<div class="t" style="left:1247.0px;top:68.69px;font-size:11px;line-height:13px;color:#000;width:100px;text-align:center;letter-spacing:-0.45px;">ELEV</div>
<div class="r" style="left:1447px;top:66px;width:1px;height:17px;background:#d0d0d0;"></div>
<div class="t" style="left:1347.0px;top:68.69px;font-size:11px;line-height:13px;color:#000;width:100px;text-align:center;letter-spacing:-0.45px;">NAME</div>
<div class="r" style="left:1547px;top:66px;width:1px;height:17px;background:#d0d0d0;"></div>
<div class="t" style="left:1447.0px;top:68.69px;font-size:11px;line-height:13px;color:#000;width:100px;text-align:center;letter-spacing:-0.45px;">USE</div>
<svg class="r" style="left:935px;top:71px" width="9" height="5"><path d="M0 0L9 0L4.5 4.5Z" fill="#4a4a4a"/></svg>
<div class="r" style="left:0;top:0;width:1567px;height:487px;clip-path:inset(84px 13px 32px 630px)"><div class="r" style="left:630px;top:66px;width:918px;height:30px;background:#f7f7f7;"></div><div class="r" style="left:630px;top:95px;width:918px;height:1px;background:#d4d4d4;"></div><div class="r" style="left:630px;top:66px;width:17px;height:29px;background:linear-gradient(#fafafa,#e6e6e6);"></div><div class="r" style="left:647px;top:66px;width:1px;height:30px;background:#c8c8c8;"></div><div class="t" style="left:633px;top:74.69px;font-size:11px;line-height:13px;color:#000;">64</div><div class="r" style="left:747px;top:66px;width:1px;height:30px;background:#d4d4d4;"></div><div class="r" style="left:847px;top:66px;width:1px;height:30px;background:#d4d4d4;"></div><div class="r" style="left:947px;top:66px;width:1px;height:30px;background:#d4d4d4;"></div><div class="t" style="left:851px;top:66.69px;font-size:11px;line-height:13px;color:#000;"></div><div class="t" style="left:851px;top:80.69px;font-size:11px;line-height:13px;color:#000;">Petersburg</div><div class="r" style="left:1047px;top:66px;width:1px;height:30px;background:#d4d4d4;"></div><div class="r" style="left:1147px;top:66px;width:1px;height:30px;background:#d4d4d4;"></div><div class="r" style="left:1247px;top:66px;width:1px;height:30px;background:#d4d4d4;"></div><div class="r" style="left:1347px;top:66px;width:1px;height:30px;background:#d4d4d4;"></div><div class="r" style="left:1447px;top:66px;width:1px;height:30px;background:#d4d4d4;"></div><div class="r" style="left:1547px;top:66px;width:1px;height:30px;background:#d4d4d4;"></div><div class="r" style="left:630px;top:96px;width:918px;height:30px;background:#ffffff;"></div><div class="r" style="left:630px;top:125px;width:918px;height:1px;background:#d4d4d4;"></div><div class="r" style="left:630px;top:96px;width:17px;height:29px;background:linear-gradient(#fafafa,#e6e6e6);"></div><div class="r" style="left:647px;top:96px;width:1px;height:30px;background:#c8c8c8;"></div><div class="t" style="left:633px;top:104.69px;font-size:11px;line-height:13px;color:#000;">65</div><div class="r" style="left:747px;top:96px;width:1px;height:30px;background:#d4d4d4;"></div><div class="t" style="left:654px;top:103.69px;font-size:11px;line-height:13px;color:#000;width:90px;text-align:right;">63</div><div class="r" style="left:847px;top:96px;width:1px;height:30px;background:#d4d4d4;"></div><div class="t" style="left:754px;top:103.69px;font-size:11px;line-height:13px;color:#000;width:90px;text-align:right;">25</div><div class="r" style="left:947px;top:96px;width:1px;height:30px;background:#d4d4d4;"></div><div class="t" style="left:851px;top:96.69px;font-size:11px;line-height:13px;color:#000;">Wrangell-</div><div class="t" style="left:851px;top:110.69px;font-size:11px;line-height:13px;color:#000;">Petersburg</div><div class="r" style="left:1047px;top:96px;width:1px;height:30px;background:#d4d4d4;"></div><div class="t" style="left:951px;top:103.69px;font-size:11px;line-height:13px;color:#000;">Census&nbsp;Area</div><div class="r" style="left:1147px;top:96px;width:1px;height:30px;background:#d4d4d4;"></div><div class="t" style="left:1054px;top:103.69px;font-size:11px;line-height:13px;color:#000;width:90px;text-align:right;">72</div><div class="r" style="left:1247px;top:96px;width:1px;height:30px;background:#d4d4d4;"></div><div class="t" style="left:1154px;top:103.69px;font-size:11px;line-height:13px;color:#000;width:90px;text-align:right;">25</div><div class="r" style="left:1347px;top:96px;width:1px;height:30px;background:#d4d4d4;"></div><div class="t" style="left:1254px;top:103.69px;font-size:11px;line-height:13px;color:#000;width:90px;text-align:right;">156</div><div class="r" style="left:1447px;top:96px;width:1px;height:30px;background:#d4d4d4;"></div><div class="t" style="left:1351px;top:103.69px;font-size:11px;line-height:13px;color:#000;letter-spacing:-0.45px;">KAKE</div><div class="r" style="left:1547px;top:96px;width:1px;height:30px;background:#d4d4d4;"></div><div class="t" style="left:1451px;top:103.69px;font-size:11px;line-height:13px;color:#000;">Other</div><div class="r" style="left:630px;top:126px;width:918px;height:30px;background:#f7f7f7;"></div><div class="r" style="left:630px;top:155px;width:918px;height:1px;background:#d4d4d4;"></div><div class="r" style="left:630px;top:126px;width:17px;height:29px;background:linear-gradient(#fafafa,#e6e6e6);"></div><div class="r" style="left:647px;top:126px;width:1px;height:30px;background:#c8c8c8;"></div><div class="t" style="left:633px;top:134.69px;font-size:11px;line-height:13px;color:#000;">66</div><div class="r" style="left:747px;top:126px;width:1px;height:30px;background:#d4d4d4;"></div><div class="t" style="left:654px;top:133.69px;font-size:11px;line-height:13px;color:#000;width:90px;text-align:right;">72</div><div class="r" style="left:847px;top:126px;width:1px;height:30px;background:#d4d4d4;"></div><div class="t" style="left:754px;top:133.69px;font-size:11px;line-height:13px;color:#000;width:90px;text-align:right;">26</div><div class="r" style="left:947px;top:126px;width:1px;height:30px;background:#d4d4d4;"></div><div class="t" style="left:851px;top:133.69px;font-size:11px;line-height:13px;color:#000;">Yukon-Koyukuk</div><div class="r" style="left:1047px;top:126px;width:1px;height:30px;background:#d4d4d4;"></div><div class="t" style="left:951px;top:133.69px;font-size:11px;line-height:13px;color:#000;">Census&nbsp;Area</div><div class="r" style="left:1147px;top:126px;width:1px;height:30px;background:#d4d4d4;"></div><div class="t" style="left:1054px;top:133.69px;font-size:11px;line-height:13px;color:#000;width:90px;text-align:right;">21</div><div class="r" style="left:1247px;top:126px;width:1px;height:30px;background:#d4d4d4;"></div><div class="t" style="left:1154px;top:133.69px;font-size:11px;line-height:13px;color:#000;width:90px;text-align:right;">26</div><div class="r" style="left:1347px;top:126px;width:1px;height:30px;background:#d4d4d4;"></div><div class="t" style="left:1254px;top:133.69px;font-size:11px;line-height:13px;color:#000;width:90px;text-align:right;">306</div><div class="r" style="left:1447px;top:126px;width:1px;height:30px;background:#d4d4d4;"></div><div class="t" style="left:1351px;top:133.69px;font-size:11px;line-height:13px;color:#000;letter-spacing:-0.45px;">MC&nbsp;GRATH</div><div class="r" style="left:1547px;top:126px;width:1px;height:30px;background:#d4d4d4;"></div><div class="t" style="left:1451px;top:133.69px;font-size:11px;line-height:13px;color:#000;">Civilian/Public</div><div class="r" style="left:630px;top:156px;width:918px;height:30px;background:#ffffff;"></div><div class="r" style="left:630px;top:185px;width:918px;height:1px;background:#d4d4d4;"></div><div class="r" style="left:630px;top:156px;width:17px;height:29px;background:linear-gradient(#fafafa,#e6e6e6);"></div><div class="r" style="left:647px;top:156px;width:1px;height:30px;background:#c8c8c8;"></div><div class="t" style="left:633px;top:164.69px;font-size:11px;line-height:13px;color:#000;">67</div><div class="r" style="left:747px;top:156px;width:1px;height:30px;background:#d4d4d4;"></div><div class="t" style="left:654px;top:163.69px;font-size:11px;line-height:13px;color:#000;width:90px;text-align:right;">73</div><div class="r" style="left:847px;top:156px;width:1px;height:30px;background:#d4d4d4;"></div><div class="t" style="left:754px;top:163.69px;font-size:11px;line-height:13px;color:#000;width:90px;text-align:right;">26</div><div class="r" style="left:947px;top:156px;width:1px;height:30px;background:#d4d4d4;"></div><div class="t" style="left:851px;top:163.69px;font-size:11px;line-height:13px;color:#000;">Yukon-Koyukuk</div><div class="r" style="left:1047px;top:156px;width:1px;height:30px;background:#d4d4d4;"></div><div class="t" style="left:951px;top:163.69px;font-size:11px;line-height:13px;color:#000;">Census&nbsp;Area</div><div class="r" style="left:1147px;top:156px;width:1px;height:30px;background:#d4d4d4;"></div><div class="t" style="left:1054px;top:163.69px;font-size:11px;line-height:13px;color:#000;width:90px;text-align:right;">22</div><div class="r" style="left:1247px;top:156px;width:1px;height:30px;background:#d4d4d4;"></div><div class="t" style="left:1154px;top:163.69px;font-size:11px;line-height:13px;color:#000;width:90px;text-align:right;">26</div><div class="r" style="left:1347px;top:156px;width:1px;height:30px;background:#d4d4d4;"></div><div class="t" style="left:1254px;top:163.69px;font-size:11px;line-height:13px;color:#000;width:90px;text-align:right;">858</div><div class="r" style="left:1447px;top:156px;width:1px;height:30px;background:#d4d4d4;"></div><div class="t" style="left:1351px;top:163.69px;font-size:11px;line-height:13px;color:#000;letter-spacing:-0.45px;">TATALINA&nbsp;LRRS</div><div class="r" style="left:1547px;top:156px;width:1px;height:30px;background:#d4d4d4;"></div><div class="t" style="left:1451px;top:163.69px;font-size:11px;line-height:13px;color:#000;">Other</div><div class="r" style="left:630px;top:186px;width:918px;height:30px;background:#f7f7f7;"></div><div class="r" style="left:630px;top:215px;width:918px;height:1px;background:#d4d4d4;"></div><div class="r" style="left:630px;top:186px;width:17px;height:29px;background:linear-gradient(#fafafa,#e6e6e6);"></div><div class="r" style="left:647px;top:186px;width:1px;height:30px;background:#c8c8c8;"></div><div class="t" style="left:633px;top:194.69px;font-size:11px;line-height:13px;color:#000;">68</div><div class="r" style="left:747px;top:186px;width:1px;height:30px;background:#d4d4d4;"></div><div class="t" style="left:654px;top:193.69px;font-size:11px;line-height:13px;color:#000;width:90px;text-align:right;">74</div><div class="r" style="left:847px;top:186px;width:1px;height:30px;background:#d4d4d4;"></div><div class="t" style="left:754px;top:193.69px;font-size:11px;line-height:13px;color:#000;width:90px;text-align:right;">26</div><div class="r" style="left:947px;top:186px;width:1px;height:30px;background:#d4d4d4;"></div><div class="t" style="left:851px;top:193.69px;font-size:11px;line-height:13px;color:#000;">Yukon-Koyukuk</div><div class="r" style="left:1047px;top:186px;width:1px;height:30px;background:#d4d4d4;"></div><div class="t" style="left:951px;top:193.69px;font-size:11px;line-height:13px;color:#000;">Census&nbsp;Area</div><div class="r" style="left:1147px;top:186px;width:1px;height:30px;background:#d4d4d4;"></div><div class="t" style="left:1054px;top:193.69px;font-size:11px;line-height:13px;color:#000;width:90px;text-align:right;">24</div><div class="r" style="left:1247px;top:186px;width:1px;height:30px;background:#d4d4d4;"></div><div class="t" style="left:1154px;top:193.69px;font-size:11px;line-height:13px;color:#000;width:90px;text-align:right;">26</div><div class="r" style="left:1347px;top:186px;width:1px;height:30px;background:#d4d4d4;"></div><div class="t" style="left:1254px;top:193.69px;font-size:11px;line-height:13px;color:#000;width:90px;text-align:right;">282</div><div class="r" style="left:1447px;top:186px;width:1px;height:30px;background:#d4d4d4;"></div><div class="t" style="left:1351px;top:193.69px;font-size:11px;line-height:13px;color:#000;letter-spacing:-0.45px;">ANVIK</div><div class="r" style="left:1547px;top:186px;width:1px;height:30px;background:#d4d4d4;"></div><div class="t" style="left:1451px;top:193.69px;font-size:11px;line-height:13px;color:#000;">Other</div><div class="r" style="left:630px;top:216px;width:918px;height:30px;background:#ffffff;"></div><div class="r" style="left:630px;top:245px;width:918px;height:1px;background:#d4d4d4;"></div><div class="r" style="left:630px;top:216px;width:17px;height:29px;background:linear-gradient(#fafafa,#e6e6e6);"></div><div class="r" style="left:647px;top:216px;width:1px;height:30px;background:#c8c8c8;"></div><div class="t" style="left:633px;top:224.69px;font-size:11px;line-height:13px;color:#000;">69</div><div class="r" style="left:747px;top:216px;width:1px;height:30px;background:#d4d4d4;"></div><div class="t" style="left:654px;top:223.69px;font-size:11px;line-height:13px;color:#000;width:90px;text-align:right;">75</div><div class="r" style="left:847px;top:216px;width:1px;height:30px;background:#d4d4d4;"></div><div class="t" style="left:754px;top:223.69px;font-size:11px;line-height:13px;color:#000;width:90px;text-align:right;">26</div><div class="r" style="left:947px;top:216px;width:1px;height:30px;background:#d4d4d4;"></div><div class="t" style="left:851px;top:223.69px;font-size:11px;line-height:13px;color:#000;">Yukon-Koyukuk</div><div class="r" style="left:1047px;top:216px;width:1px;height:30px;background:#d4d4d4;"></div><div class="t" style="left:951px;top:223.69px;font-size:11px;line-height:13px;color:#000;">Census&nbsp;Area</div><div class="r" style="left:1147px;top:216px;width:1px;height:30px;background:#d4d4d4;"></div><div class="t" style="left:1054px;top:223.69px;font-size:11px;line-height:13px;color:#000;width:90px;text-align:right;">34</div><div class="r" style="left:1247px;top:216px;width:1px;height:30px;background:#d4d4d4;"></div><div class="t" style="left:1154px;top:223.69px;font-size:11px;line-height:13px;color:#000;width:90px;text-align:right;">26</div><div class="r" style="left:1347px;top:216px;width:1px;height:30px;background:#d4d4d4;"></div><div class="t" style="left:1254px;top:223.69px;font-size:11px;line-height:13px;color:#000;width:90px;text-align:right;">393</div><div class="r" style="left:1447px;top:216px;width:1px;height:30px;background:#d4d4d4;"></div><div class="t" style="left:1351px;top:223.69px;font-size:11px;line-height:13px;color:#000;letter-spacing:-0.45px;">FORT&nbsp;YUKON</div><div class="r" style="left:1547px;top:216px;width:1px;height:30px;background:#d4d4d4;"></div><div class="t" style="left:1451px;top:223.69px;font-size:11px;line-height:13px;color:#000;">Other</div><div class="r" style="left:630px;top:246px;width:918px;height:30px;background:#f7f7f7;"></div><div class="r" style="left:630px;top:275px;width:918px;height:1px;background:#d4d4d4;"></div><div class="r" style="left:630px;top:246px;width:17px;height:29px;background:linear-gradient(#fafafa,#e6e6e6);"></div><div class="r" style="left:647px;top:246px;width:1px;height:30px;background:#c8c8c8;"></div><div class="t" style="left:633px;top:254.69px;font-size:11px;line-height:13px;color:#000;">70</div><div class="r" style="left:747px;top:246px;width:1px;height:30px;background:#d4d4d4;"></div><div class="t" style="left:654px;top:253.69px;font-size:11px;line-height:13px;color:#000;width:90px;text-align:right;">76</div><div class="r" style="left:847px;top:246px;width:1px;height:30px;background:#d4d4d4;"></div><div class="t" style="left:754px;top:253.69px;font-size:11px;line-height:13px;color:#000;width:90px;text-align:right;">26</div><div class="r" style="left:947px;top:246px;width:1px;height:30px;background:#d4d4d4;"></div><div class="t" style="left:851px;top:253.69px;font-size:11px;line-height:13px;color:#000;">Yukon-Koyukuk</div><div class="r" style="left:1047px;top:246px;width:1px;height:30px;background:#d4d4d4;"></div><div class="t" style="left:951px;top:253.69px;font-size:11px;line-height:13px;color:#000;">Census&nbsp;Area</div><div class="r" style="left:1147px;top:246px;width:1px;height:30px;background:#d4d4d4;"></div><div class="t" style="left:1054px;top:253.69px;font-size:11px;line-height:13px;color:#000;width:90px;text-align:right;">38</div><div class="r" style="left:1247px;top:246px;width:1px;height:30px;background:#d4d4d4;"></div><div class="t" style="left:1154px;top:253.69px;font-size:11px;line-height:13px;color:#000;width:90px;text-align:right;">26</div><div class="r" style="left:1347px;top:246px;width:1px;height:30px;background:#d4d4d4;"></div><div class="t" style="left:1254px;top:253.69px;font-size:11px;line-height:13px;color:#000;width:90px;text-align:right;">330</div><div class="r" style="left:1447px;top:246px;width:1px;height:30px;background:#d4d4d4;"></div><div class="t" style="left:1351px;top:253.69px;font-size:11px;line-height:13px;color:#000;letter-spacing:-0.45px;">NENANA&nbsp;MUNI</div><div class="r" style="left:1547px;top:246px;width:1px;height:30px;background:#d4d4d4;"></div><div class="t" style="left:1451px;top:253.69px;font-size:11px;line-height:13px;color:#000;">Other</div><div class="r" style="left:630px;top:276px;width:918px;height:30px;background:#ffffff;"></div><div class="r" style="left:630px;top:305px;width:918px;height:1px;background:#d4d4d4;"></div><div class="r" style="left:630px;top:276px;width:17px;height:29px;background:linear-gradient(#fafafa,#e6e6e6);"></div><div class="r" style="left:647px;top:276px;width:1px;height:30px;background:#c8c8c8;"></div><div class="t" style="left:633px;top:284.69px;font-size:11px;line-height:13px;color:#000;">71</div><div class="r" style="left:747px;top:276px;width:1px;height:30px;background:#d4d4d4;"></div><div class="t" style="left:654px;top:283.69px;font-size:11px;line-height:13px;color:#000;width:90px;text-align:right;">66</div><div class="r" style="left:847px;top:276px;width:1px;height:30px;background:#d4d4d4;"></div><div class="t" style="left:754px;top:283.69px;font-size:11px;line-height:13px;color:#000;width:90px;text-align:right;">26</div><div class="r" style="left:947px;top:276px;width:1px;height:30px;background:#d4d4d4;"></div><div class="t" style="left:851px;top:283.69px;font-size:11px;line-height:13px;color:#000;">Yukon-Koyukuk</div><div class="r" style="left:1047px;top:276px;width:1px;height:30px;background:#d4d4d4;"></div><div class="t" style="left:951px;top:283.69px;font-size:11px;line-height:13px;color:#000;">Census&nbsp;Area</div><div class="r" style="left:1147px;top:276px;width:1px;height:30px;background:#d4d4d4;"></div><div class="t" style="left:1054px;top:283.69px;font-size:11px;line-height:13px;color:#000;width:90px;text-align:right;">3</div><div class="r" style="left:1247px;top:276px;width:1px;height:30px;background:#d4d4d4;"></div><div class="t" style="left:1154px;top:283.69px;font-size:11px;line-height:13px;color:#000;width:90px;text-align:right;">26</div><div class="r" style="left:1347px;top:276px;width:1px;height:30px;background:#d4d4d4;"></div><div class="t" style="left:1254px;top:283.69px;font-size:11px;line-height:13px;color:#000;width:90px;text-align:right;">585</div><div class="r" style="left:1447px;top:276px;width:1px;height:30px;background:#d4d4d4;"></div><div class="t" style="left:1351px;top:283.69px;font-size:11px;line-height:13px;color:#000;letter-spacing:-0.45px;">BETTLES</div><div class="r" style="left:1547px;top:276px;width:1px;height:30px;background:#d4d4d4;"></div><div class="t" style="left:1451px;top:283.69px;font-size:11px;line-height:13px;color:#000;">Other</div><div class="r" style="left:630px;top:306px;width:918px;height:30px;background:#f7f7f7;"></div><div class="r" style="left:630px;top:335px;width:918px;height:1px;background:#d4d4d4;"></div><div class="r" style="left:630px;top:306px;width:17px;height:29px;background:linear-gradient(#fafafa,#e6e6e6);"></div><div class="r" style="left:647px;top:306px;width:1px;height:30px;background:#c8c8c8;"></div><div class="t" style="left:633px;top:314.69px;font-size:11px;line-height:13px;color:#000;">72</div><div class="r" style="left:747px;top:306px;width:1px;height:30px;background:#d4d4d4;"></div><div class="t" style="left:654px;top:313.69px;font-size:11px;line-height:13px;color:#000;width:90px;text-align:right;">67</div><div class="r" style="left:847px;top:306px;width:1px;height:30px;background:#d4d4d4;"></div><div class="t" style="left:754px;top:313.69px;font-size:11px;line-height:13px;color:#000;width:90px;text-align:right;">26</div><div class="r" style="left:947px;top:306px;width:1px;height:30px;background:#d4d4d4;"></div><div class="t" style="left:851px;top:313.69px;font-size:11px;line-height:13px;color:#000;">Yukon-Koyukuk</div><div class="r" style="left:1047px;top:306px;width:1px;height:30px;background:#d4d4d4;"></div><div class="t" style="left:951px;top:313.69px;font-size:11px;line-height:13px;color:#000;">Census&nbsp;Area</div><div class="r" style="left:1147px;top:306px;width:1px;height:30px;background:#d4d4d4;"></div><div class="t" style="left:1054px;top:313.69px;font-size:11px;line-height:13px;color:#000;width:90px;text-align:right;">6</div><div class="r" style="left:1247px;top:306px;width:1px;height:30px;background:#d4d4d4;"></div><div class="t" style="left:1154px;top:313.69px;font-size:11px;line-height:13px;color:#000;width:90px;text-align:right;">26</div><div class="r" style="left:1347px;top:306px;width:1px;height:30px;background:#d4d4d4;"></div><div class="t" style="left:1254px;top:313.69px;font-size:11px;line-height:13px;color:#000;width:90px;text-align:right;">1113</div><div class="r" style="left:1447px;top:306px;width:1px;height:30px;background:#d4d4d4;"></div><div class="t" style="left:1351px;top:306.69px;font-size:11px;line-height:13px;color:#000;letter-spacing:-0.45px;">INDIAN</div><div class="t" style="left:1351px;top:320.69px;font-size:11px;line-height:13px;color:#000;letter-spacing:-0.45px;">MOUNTAIN&nbsp;LRRS</div><div class="r" style="left:1547px;top:306px;width:1px;height:30px;background:#d4d4d4;"></div><div class="t" style="left:1451px;top:313.69px;font-size:11px;line-height:13px;color:#000;">Other</div><div class="r" style="left:630px;top:336px;width:918px;height:30px;background:#ffffff;"></div><div class="r" style="left:630px;top:365px;width:918px;height:1px;background:#d4d4d4;"></div><div class="r" style="left:630px;top:336px;width:17px;height:29px;background:linear-gradient(#fafafa,#e6e6e6);"></div><div class="r" style="left:647px;top:336px;width:1px;height:30px;background:#c8c8c8;"></div><div class="t" style="left:633px;top:344.69px;font-size:11px;line-height:13px;color:#000;">73</div><div class="r" style="left:747px;top:336px;width:1px;height:30px;background:#d4d4d4;"></div><div class="t" style="left:654px;top:343.69px;font-size:11px;line-height:13px;color:#000;width:90px;text-align:right;">68</div><div class="r" style="left:847px;top:336px;width:1px;height:30px;background:#d4d4d4;"></div><div class="t" style="left:754px;top:343.69px;font-size:11px;line-height:13px;color:#000;width:90px;text-align:right;">26</div><div class="r" style="left:947px;top:336px;width:1px;height:30px;background:#d4d4d4;"></div><div class="t" style="left:851px;top:343.69px;font-size:11px;line-height:13px;color:#000;">Yukon-Koyukuk</div><div class="r" style="left:1047px;top:336px;width:1px;height:30px;background:#d4d4d4;"></div><div class="t" style="left:951px;top:343.69px;font-size:11px;line-height:13px;color:#000;">Census&nbsp;Area</div><div class="r" style="left:1147px;top:336px;width:1px;height:30px;background:#d4d4d4;"></div><div class="t" style="left:1054px;top:343.69px;font-size:11px;line-height:13px;color:#000;width:90px;text-align:right;">11</div><div class="r" style="left:1247px;top:336px;width:1px;height:30px;background:#d4d4d4;"></div><div class="t" style="left:1154px;top:343.69px;font-size:11px;line-height:13px;color:#000;width:90px;text-align:right;">26</div><div class="r" style="left:1347px;top:336px;width:1px;height:30px;background:#d4d4d4;"></div><div class="t" style="left:1254px;top:343.69px;font-size:11px;line-height:13px;color:#000;width:90px;text-align:right;">207</div><div class="r" style="left:1447px;top:336px;width:1px;height:30px;background:#d4d4d4;"></div><div class="t" style="left:1351px;top:336.69px;font-size:11px;line-height:13px;color:#000;letter-spacing:-0.45px;">RALPH&nbsp;M</div><div class="t" style="left:1351px;top:350.69px;font-size:11px;line-height:13px;color:#000;letter-spacing:-0.45px;">CALHOUN</div><div class="r" style="left:1547px;top:336px;width:1px;height:30px;background:#d4d4d4;"></div><div class="t" style="left:1451px;top:343.69px;font-size:11px;line-height:13px;color:#000;">Other</div><div class="r" style="left:630px;top:366px;width:918px;height:30px;background:#f7f7f7;"></div><div class="r" style="left:630px;top:395px;width:918px;height:1px;background:#d4d4d4;"></div><div class="r" style="left:630px;top:366px;width:17px;height:29px;background:linear-gradient(#fafafa,#e6e6e6);"></div><div class="r" style="left:647px;top:366px;width:1px;height:30px;background:#c8c8c8;"></div><div class="t" style="left:633px;top:374.69px;font-size:11px;line-height:13px;color:#000;">74</div><div class="r" style="left:747px;top:366px;width:1px;height:30px;background:#d4d4d4;"></div><div class="t" style="left:654px;top:373.69px;font-size:11px;line-height:13px;color:#000;width:90px;text-align:right;">69</div><div class="r" style="left:847px;top:366px;width:1px;height:30px;background:#d4d4d4;"></div><div class="t" style="left:754px;top:373.69px;font-size:11px;line-height:13px;color:#000;width:90px;text-align:right;">26</div><div class="r" style="left:947px;top:366px;width:1px;height:30px;background:#d4d4d4;"></div><div class="t" style="left:851px;top:373.69px;font-size:11px;line-height:13px;color:#000;">Yukon-Koyukuk</div><div class="r" style="left:1047px;top:366px;width:1px;height:30px;background:#d4d4d4;"></div><div class="t" style="left:951px;top:373.69px;font-size:11px;line-height:13px;color:#000;">Census&nbsp;Area</div><div class="r" style="left:1147px;top:366px;width:1px;height:30px;background:#d4d4d4;"></div><div class="t" style="left:1054px;top:373.69px;font-size:11px;line-height:13px;color:#000;width:90px;text-align:right;">13</div><div class="r" style="left:1247px;top:366px;width:1px;height:30px;background:#d4d4d4;"></div><div class="t" style="left:1154px;top:373.69px;font-size:11px;line-height:13px;color:#000;width:90px;text-align:right;">26</div><div class="r" style="left:1347px;top:366px;width:1px;height:30px;background:#d4d4d4;"></div><div class="t" style="left:1254px;top:373.69px;font-size:11px;line-height:13px;color:#000;width:90px;text-align:right;">138</div><div class="r" style="left:1447px;top:366px;width:1px;height:30px;background:#d4d4d4;"></div><div class="t" style="left:1351px;top:366.69px;font-size:11px;line-height:13px;color:#000;letter-spacing:-0.45px;">EDWARD&nbsp;G&nbsp;PITKA</div><div class="t" style="left:1351px;top:380.69px;font-size:11px;line-height:13px;color:#000;">SR</div><div class="r" style="left:1547px;top:366px;width:1px;height:30px;background:#d4d4d4;"></div><div class="t" style="left:1451px;top:366.69px;font-size:11px;line-height:13px;color:#000;">Joint&nbsp;Military/</div><div class="t" style="left:1451px;top:380.69px;font-size:11px;line-height:13px;color:#000;">Civilian</div><div class="r" style="left:630px;top:396px;width:918px;height:30px;background:#ffffff;"></div><div class="r" style="left:630px;top:425px;width:918px;height:1px;background:#d4d4d4;"></div><div class="r" style="left:630px;top:396px;width:17px;height:29px;background:linear-gradient(#fafafa,#e6e6e6);"></div><div class="r" style="left:647px;top:396px;width:1px;height:30px;background:#c8c8c8;"></div><div class="t" style="left:633px;top:404.69px;font-size:11px;line-height:13px;color:#000;">75</div><div class="r" style="left:747px;top:396px;width:1px;height:30px;background:#d4d4d4;"></div><div class="t" style="left:654px;top:403.69px;font-size:11px;line-height:13px;color:#000;width:90px;text-align:right;">70</div><div class="r" style="left:847px;top:396px;width:1px;height:30px;background:#d4d4d4;"></div><div class="t" style="left:754px;top:403.69px;font-size:11px;line-height:13px;color:#000;width:90px;text-align:right;">26</div><div class="r" style="left:947px;top:396px;width:1px;height:30px;background:#d4d4d4;"></div><div class="t" style="left:851px;top:403.69px;font-size:11px;line-height:13px;color:#000;">Yukon-Koyukuk</div><div class="r" style="left:1047px;top:396px;width:1px;height:30px;background:#d4d4d4;"></div><div class="t" style="left:951px;top:403.69px;font-size:11px;line-height:13px;color:#000;">Census&nbsp;Area</div><div class="r" style="left:1147px;top:396px;width:1px;height:30px;background:#d4d4d4;"></div><div class="t" style="left:1054px;top:403.69px;font-size:11px;line-height:13px;color:#000;width:90px;text-align:right;">16</div><div class="r" style="left:1247px;top:396px;width:1px;height:30px;background:#d4d4d4;"></div><div class="t" style="left:1154px;top:403.69px;font-size:11px;line-height:13px;color:#000;width:90px;text-align:right;">26</div><div class="r" style="left:1347px;top:396px;width:1px;height:30px;background:#d4d4d4;"></div><div class="t" style="left:1254px;top:403.69px;font-size:11px;line-height:13px;color:#000;width:90px;text-align:right;">1461</div><div class="r" style="left:1447px;top:396px;width:1px;height:30px;background:#d4d4d4;"></div><div class="t" style="left:1351px;top:396.69px;font-size:11px;line-height:13px;color:#000;letter-spacing:-0.45px;">KALAKAKET</div><div class="t" style="left:1351px;top:410.69px;font-size:11px;line-height:13px;color:#000;letter-spacing:-0.45px;">CREEK&nbsp;&nbsp;AS</div><div class="r" style="left:1547px;top:396px;width:1px;height:30px;background:#d4d4d4;"></div><div class="t" style="left:1451px;top:403.69px;font-size:11px;line-height:13px;color:#000;">Military</div><div class="r" style="left:630px;top:426px;width:918px;height:30px;background:#f7f7f7;"></div><div class="r" style="left:630px;top:455px;width:918px;height:1px;background:#d4d4d4;"></div><div class="r" style="left:630px;top:426px;width:17px;height:29px;background:linear-gradient(#fafafa,#e6e6e6);"></div><div class="r" style="left:647px;top:426px;width:1px;height:30px;background:#c8c8c8;"></div><div class="t" style="left:633px;top:434.69px;font-size:11px;line-height:13px;color:#000;">76</div><div class="r" style="left:747px;top:426px;width:1px;height:30px;background:#d4d4d4;"></div><div class="t" style="left:654px;top:433.69px;font-size:11px;line-height:13px;color:#000;width:90px;text-align:right;">71</div><div class="r" style="left:847px;top:426px;width:1px;height:30px;background:#d4d4d4;"></div><div class="t" style="left:754px;top:433.69px;font-size:11px;line-height:13px;color:#000;width:90px;text-align:right;">26</div><div class="r" style="left:947px;top:426px;width:1px;height:30px;background:#d4d4d4;"></div><div class="t" style="left:851px;top:433.69px;font-size:11px;line-height:13px;color:#000;">Yukon-Koyukuk</div><div class="r" style="left:1047px;top:426px;width:1px;height:30px;background:#d4d4d4;"></div><div class="t" style="left:951px;top:433.69px;font-size:11px;line-height:13px;color:#000;">Census&nbsp;Area</div><div class="r" style="left:1147px;top:426px;width:1px;height:30px;background:#d4d4d4;"></div><div class="t" style="left:1054px;top:433.69px;font-size:11px;line-height:13px;color:#000;width:90px;text-align:right;">18</div><div class="r" style="left:1247px;top:426px;width:1px;height:30px;background:#d4d4d4;"></div><div class="t" style="left:1154px;top:433.69px;font-size:11px;line-height:13px;color:#000;width:90px;text-align:right;">26</div><div class="r" style="left:1347px;top:426px;width:1px;height:30px;background:#d4d4d4;"></div><div class="t" style="left:1254px;top:433.69px;font-size:11px;line-height:13px;color:#000;width:90px;text-align:right;">624</div><div class="r" style="left:1447px;top:426px;width:1px;height:30px;background:#d4d4d4;"></div><div class="t" style="left:1351px;top:433.69px;font-size:11px;line-height:13px;color:#000;letter-spacing:-0.45px;">MINCHUMINA</div><div class="r" style="left:1547px;top:426px;width:1px;height:30px;background:#d4d4d4;"></div><div class="t" style="left:1451px;top:433.69px;font-size:11px;line-height:13px;color:#000;">Other</div></div>
<div class="r" style="left:630px;top:455px;width:924px;height:1px;background:#bcbcbc;"></div>
<div class="r" style="left:630px;top:456px;width:937px;height:1px;background:#dcdcdc;"></div>
<div class="r" style="left:1548px;top:84px;width:6px;height:371px;background:#ffffff;"></div>
<div class="r" style="left:1554px;top:65px;width:1px;height:391px;background:#c4c4c4;"></div>
<div class="r" style="left:1555px;top:66px;width:12px;height:389px;background:linear-gradient(90deg,#fdfdfd,#f3f3f3);"></div>
<div class="r" style="left:1555px;top:66px;width:12px;height:13px;background:#ffffff;"></div>
<div class="r" style="left:1555px;top:79px;width:12px;height:1px;background:#cfcfcf;"></div>
<svg class="r" style="left:1557px;top:70px" width="8" height="4"><path d="M0 4L8 4L4 0Z" fill="#444"/></svg>
<div class="r" style="left:1555px;top:80px;width:12px;height:304px;background:#e3e3e3;"></div>
<div class="r" style="left:1555px;top:384px;width:12px;height:1px;background:#c9c9c9;"></div>
<div class="r" style="left:1555px;top:442px;width:12px;height:1px;background:#cfcfcf;"></div>
<div class="r" style="left:1555px;top:443px;width:12px;height:12px;background:#ffffff;"></div>
<svg class="r" style="left:1557px;top:447px" width="8" height="4"><path d="M0 0L8 0L4 4Z" fill="#444"/></svg>
<div class="r" style="left:630px;top:65px;width:937px;height:1px;background:#c4c4c4;"></div>
<div class="r" style="left:630px;top:455px;width:937px;height:1px;background:#bcbcbc;"></div>
<div class="r" style="left:633px;top:460px;width:123px;height:23px;background:linear-gradient(#fcfcfc,#efefef);border:1px solid #bdbdbd;box-sizing:border-box;border-radius:3px;"></div>
<svg class="r" style="left:637px;top:463px" width="14" height="16"><path d="M1 1.5L13 1.5L13 3.5L8.5 8.5L8.5 15L5.5 13.5L5.5 8.5L1 3.5Z" fill="#5b8fc6"/><rect x="1" y="1" width="12" height="2" fill="#e8d84a"/></svg>
<div class="t" style="left:654px;top:465.69px;font-size:11px;line-height:13px;color:#000;">Show All Features</div>
<svg class="r" style="left:747px;top:476px" width="6" height="4"><path d="M0 0L6 0L3 3.5Z" fill="#555"/></svg>
<div class="r" style="left:1542px;top:460px;width:24px;height:23px;background:#dcdcdc;border:1px solid #b5b5b5;box-sizing:border-box;border-radius:3px;"></div>
<svg class="r" style="left:1522px;top:463px" width="16" height="16" viewBox="0 0 16 16"><rect x="1" y="1" width="13" height="13" rx="1" fill="#eef3f9" stroke="#9fbde0" stroke-width="0.8"/><rect x="2.5" y="4" width="3" height="1.5" fill="#3d5f8f"/><rect x="6.5" y="3" width="6" height="3.5" fill="#fff" stroke="#9fbde0" stroke-width="0.6"/><rect x="2.5" y="9" width="3" height="1.5" fill="#3d5f8f"/><rect x="6.5" y="8" width="6" height="3.5" fill="#fff" stroke="#9fbde0" stroke-width="0.6"/></svg>
<svg class="r" style="left:1546px;top:463px" width="16" height="16" viewBox="0 0 16 16"><rect x="1.5" y="1.5" width="13" height="13" rx="1" fill="#d5e4f5" stroke="#8fb0d8" stroke-width="0.8"/><rect x="1.5" y="1.5" width="13" height="3" fill="#9fc0e6"/><path d="M3 7H5M7 7H13M3 9.5H5M7 9.5H13M3 12H5M7 12H13" stroke="#8fb0d8" stroke-width="0.8"/></svg>
<div class="r" style="left:0px;top:486px;width:1567px;height:0px;background:none;"></div>
<div class="r" style="left:630px;top:486px;width:937px;height:1px;background:#c9c9a4;"></div>
</body></html>
